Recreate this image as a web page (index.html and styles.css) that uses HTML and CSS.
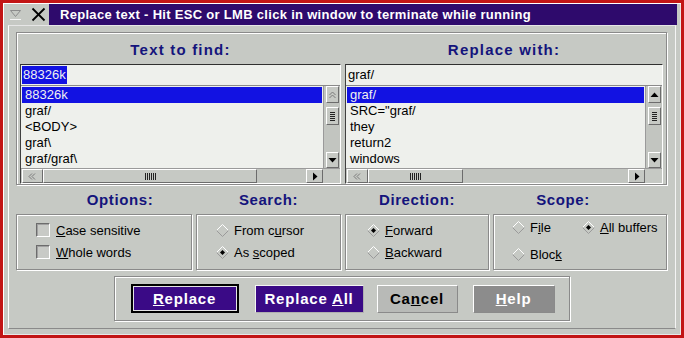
FILE: index.html
```html
<!DOCTYPE html>
<html lang="en">
<head>
	<meta charset="UTF-8">
	<title>Replace text</title>
	<link rel="stylesheet" href="styles.css">
</head>
<body>
<div class="win">
	<div class="titlerow">
		<div class="sysicons">
			<svg class="ico-min" width="13" height="12" viewBox="0 0 13 12"><polygon points="1.5,1.5 11.5,1.5 6.5,7.5" fill="none" stroke="#8c8c8c"/><line x1="1" y1="10.5" x2="12" y2="10.5" stroke="#f4f4f4"/></svg>
			<svg class="ico-close" width="15" height="15" viewBox="0 0 15 15"><line x1="1.5" y1="1.5" x2="13.5" y2="13.5" stroke="#000" stroke-width="1.8"/><line x1="13.5" y1="1.5" x2="1.5" y2="13.5" stroke="#000" stroke-width="1.8"/></svg>
		</div>
		<div class="title">Replace text - Hit ESC or LMB click in window to terminate while running</div>
	</div>

	<div class="main">
		<div class="lists">
			<div class="pane">
				<h2>Text to find:</h2>
				<div class="field">
					<div class="entry"><span class="sel">88326k</span></div>
					<div class="listbox">
						<ul class="items">
							<li class="current">88326k</li>
							<li>graf/</li>
							<li>&lt;BODY&gt;</li>
							<li>graf\</li>
							<li>graf/graf\</li>
						</ul>
						<div class="vscroll">
							<div class="sbtn up">
								<svg width="11" height="15" viewBox="0 0 11 15"><polyline points="2.5,8 5.5,5 8.5,8" fill="none" stroke="#7a7a7a"/><polyline points="2.5,11 5.5,8 8.5,11" fill="none" stroke="#7a7a7a"/></svg>
							</div>
							<div class="vthumb">
								<svg width="11" height="16" viewBox="0 0 11 16"><path d="M3 4.5h5M3 6.5h5M3 8.5h5M3 10.5h5M3 12.5h5" stroke="#222"/></svg>
							</div>
							<div class="sbtn down">
								<svg width="11" height="14" viewBox="0 0 11 14"><polygon points="1.5,5 9.5,5 5.5,9.5" fill="#000"/></svg>
							</div>
						</div>
					</div>
					<div class="hscroll">
						<div class="sbtn hbtn">
							<svg width="19" height="13" viewBox="0 0 19 13"><polyline points="9,3.5 6,6.5 9,9.5" fill="none" stroke="#7a7a7a"/><polyline points="12,3.5 9,6.5 12,9.5" fill="none" stroke="#7a7a7a"/></svg>
						</div>
						<div class="hthumb thumb-long">
							<svg width="13" height="9" viewBox="0 0 13 9"><path d="M1.5 1v7M3.5 1v7M5.5 1v7M7.5 1v7M9.5 1v7M11.5 1v7" stroke="#222"/></svg>
						</div>
						<div class="trough"></div>
						<div class="sbtn hbtn right">
							<svg width="15" height="13" viewBox="0 0 15 13"><polygon points="6,2.5 10.5,6.5 6,10.5" fill="#000"/></svg>
						</div>
						<div class="corner"></div>
					</div>
				</div>
			</div>

			<div class="pane">
				<h2>Replace with:</h2>
				<div class="field">
					<div class="entry"><span class="plain">graf/</span></div>
					<div class="listbox">
						<ul class="items">
							<li class="current">graf/</li>
							<li>SRC="graf/</li>
							<li>they</li>
							<li>return2</li>
							<li>windows</li>
						</ul>
						<div class="vscroll">
							<div class="sbtn up">
								<svg width="11" height="15" viewBox="0 0 11 15"><polygon points="1.5,10 9.5,10 5.5,5.5" fill="#000"/></svg>
							</div>
							<div class="vthumb">
								<svg width="11" height="16" viewBox="0 0 11 16"><path d="M3 4.5h5M3 6.5h5M3 8.5h5M3 10.5h5M3 12.5h5" stroke="#222"/></svg>
							</div>
							<div class="sbtn down">
								<svg width="11" height="14" viewBox="0 0 11 14"><polygon points="1.5,5 9.5,5 5.5,9.5" fill="#000"/></svg>
							</div>
						</div>
					</div>
					<div class="hscroll">
						<div class="sbtn hbtn">
							<svg width="19" height="13" viewBox="0 0 19 13"><polyline points="9,3.5 6,6.5 9,9.5" fill="none" stroke="#7a7a7a"/><polyline points="12,3.5 9,6.5 12,9.5" fill="none" stroke="#7a7a7a"/></svg>
						</div>
						<div class="hthumb thumb-short">
							<svg width="13" height="9" viewBox="0 0 13 9"><path d="M1.5 1v7M3.5 1v7M5.5 1v7M7.5 1v7M9.5 1v7M11.5 1v7" stroke="#222"/></svg>
						</div>
						<div class="trough"></div>
						<div class="sbtn hbtn right">
							<svg width="15" height="13" viewBox="0 0 15 13"><polygon points="6,2.5 10.5,6.5 6,10.5" fill="#000"/></svg>
						</div>
						<div class="corner"></div>
					</div>
				</div>
			</div>
		</div>

		<div class="groups">
			<div class="group">
				<h3 class="h-opts">Options:</h3>
				<div class="box opts">
					<label class="row"><span class="check"></span><span><u>C</u>ase sensitive</span></label>
					<label class="row"><span class="check"></span><span><u>W</u>hole words</span></label>
				</div>
			</div>
			<div class="group">
				<h3>Search:</h3>
				<div class="box search">
					<label class="row"><svg class="radio" width="13" height="13" viewBox="0 0 13 13"><polyline points="0.5,6.5 6.5,0.5 12.5,6.5" fill="none" stroke="#fff"/><polyline points="0.5,6.5 6.5,12.5 12.5,6.5" fill="none" stroke="#9a9a9a"/></svg><span>From c<u>u</u>rsor</span></label>
					<label class="row"><svg class="radio" width="13" height="13" viewBox="0 0 13 13"><polyline points="0.5,6.5 6.5,0.5 12.5,6.5" fill="none" stroke="#fff"/><polyline points="0.5,6.5 6.5,12.5 12.5,6.5" fill="none" stroke="#9a9a9a"/><polygon points="6.5,4 9,6.5 6.5,9 4,6.5" fill="#000"/></svg><span>As <u>s</u>coped</span></label>
				</div>
			</div>
			<div class="group">
				<h3>Direction:</h3>
				<div class="box dir">
					<label class="row"><svg class="radio" width="13" height="13" viewBox="0 0 13 13"><polyline points="0.5,6.5 6.5,0.5 12.5,6.5" fill="none" stroke="#fff"/><polyline points="0.5,6.5 6.5,12.5 12.5,6.5" fill="none" stroke="#9a9a9a"/><polygon points="6.5,4 9,6.5 6.5,9 4,6.5" fill="#000"/></svg><span><u>F</u>orward</span></label>
					<label class="row"><svg class="radio" width="13" height="13" viewBox="0 0 13 13"><polyline points="0.5,6.5 6.5,0.5 12.5,6.5" fill="none" stroke="#fff"/><polyline points="0.5,6.5 6.5,12.5 12.5,6.5" fill="none" stroke="#9a9a9a"/></svg><span><u>B</u>ackward</span></label>
				</div>
			</div>
			<div class="group">
				<h3 class="h-scope">Scope:</h3>
				<div class="box scope">
					<label class="row"><svg class="radio" width="13" height="13" viewBox="0 0 13 13"><polyline points="0.5,6.5 6.5,0.5 12.5,6.5" fill="none" stroke="#fff"/><polyline points="0.5,6.5 6.5,12.5 12.5,6.5" fill="none" stroke="#9a9a9a"/></svg><span>F<u>i</u>le</span></label>
					<label class="row"><svg class="radio" width="13" height="13" viewBox="0 0 13 13"><polyline points="0.5,6.5 6.5,0.5 12.5,6.5" fill="none" stroke="#fff"/><polyline points="0.5,6.5 6.5,12.5 12.5,6.5" fill="none" stroke="#9a9a9a"/><polygon points="6.5,4 9,6.5 6.5,9 4,6.5" fill="#000"/></svg><span><u>A</u>ll buffers</span></label>
					<label class="row"><svg class="radio" width="13" height="13" viewBox="0 0 13 13"><polyline points="0.5,6.5 6.5,0.5 12.5,6.5" fill="none" stroke="#fff"/><polyline points="0.5,6.5 6.5,12.5 12.5,6.5" fill="none" stroke="#9a9a9a"/></svg><span>Bloc<u>k</u></span></label>
				</div>
			</div>
		</div>

		<div class="btnbar">
			<button class="btn purple default"><u>R</u>eplace</button>
			<button class="btn purple all">Replace <u>A</u>ll</button>
			<button class="btn cancel">Ca<u>n</u>cel</button>
			<button class="btn help"><u>H</u>elp</button>
		</div>
	</div>
</div>
</body>
</html>
```

FILE: styles.css
```css
*{margin:0;padding:0;box-sizing:border-box;list-style:none;}
body{
	width:684px;
	height:338px;
	overflow:hidden;
	font-family:"Liberation Sans",Arial,sans-serif;
	font-size:13px;
	color:#000;
	background:#c6c9c4;
}
.win{
	width:684px;
	height:338px;
	border:3px solid #c21515;
	box-shadow:inset 1px 1px 0 #fff, inset -1px -1px 0 #e8e8e8;
	background:#c6c9c4;
	display:flex;
	flex-direction:column;
}

/* title */
.titlerow{
	display:flex;
	height:21px;
	margin:1px 4px 0 1px;
}
.sysicons{
	width:45px;
	display:flex;
	align-items:center;
	gap:9px;
	padding-left:5px;
	background:#c6c9c4;
}
.ico-min{margin-top:1px;}
.title{
	flex:1;
	background:#2e0a6c;
	color:#fff;
	font-weight:bold;
	font-size:13px;
	letter-spacing:0.3px;
	line-height:21px;
	padding-left:11px;
	white-space:nowrap;
}

/* body frame */
.main{
	flex:1;
	margin:0 5px 6px 5px;
	border:1px solid;
	border-color:#e6e6e6 #f4f4f4 #8a8a8a #fff;
	padding:6px 8px 7px 7px;
	display:flex;
	flex-direction:column;
}
.lists{
	height:153px;
	border:1px solid #8a8a8a;
	box-shadow:inset 1px 1px 0 #fff, 1px 1px 0 #fff;
	display:flex;
	gap:4px;
	padding:0 3px;
}
.pane{
	display:flex;
	flex-direction:column;
}
.pane:first-child{width:321px;}
.pane:last-child{width:318px;}
.pane h2, .group h3{
	font-size:15px;
	font-weight:bold;
	color:#14147c;
	text-align:center;
	letter-spacing:0.6px;
}
.pane h2{height:31px;line-height:33px;letter-spacing:1.2px;}
.field{
	height:120px;
	border:1px solid;
	border-color:#303030 #fff #fff #404040;
	display:flex;
	flex-direction:column;
	background:#eef0ec;
}
.entry{
	height:21px;
	border-bottom:1px solid #8a8a8a;
	padding-left:1px;
}
.entry span{
	display:inline-block;
	margin-top:1px;
	line-height:18px;
	padding:0 1px;
}
.entry .sel{background:#1212e2;color:#f0f0f0;}
.listbox{
	height:82px;
	display:flex;
}
.items{
	flex:1;
	padding:1px 1px 0 1px;
	overflow:hidden;
}
.items li{
	height:16px;
	line-height:16px;
	padding-left:3px;
	white-space:nowrap;
}
.items li.current{background:#1212e2;color:#f0f0f0;}

/* scrollbars */
.sbtn{
	background:#c6c9c4;
	border:1px solid;
	border-color:#fff #6c6c6c #6c6c6c #fff;
	display:flex;
	align-items:center;
	justify-content:center;
}
.vscroll{
	width:17px;
	background:#c2c5c0;
	border-left:1px solid #9a9a9a;
	display:flex;
	flex-direction:column;
	align-items:center;
}
.vscroll .sbtn{width:13px;}
.vscroll .up{height:17px;}
.vscroll .down{height:16px;margin-top:auto;}
.vthumb{
	width:13px;
	height:18px;
	margin-top:4px;
	background:#c6c9c4;
	border:1px solid;
	border-color:#fff #6c6c6c #6c6c6c #fff;
	display:flex;
	align-items:center;
	justify-content:center;
}
.hscroll{
	height:15px;
	display:flex;
	background:#c2c5c0;
	border-top:1px solid #9a9a9a;
}
.hbtn{width:21px;margin-left:1px;}
.hbtn.right{width:17px;margin-left:0;}
.hthumb{
	background:#c6c9c4;
	border:1px solid;
	border-color:#fff #6c6c6c #6c6c6c #fff;
	display:flex;
	align-items:center;
	justify-content:center;
}
.thumb-long{width:214px;}
.thumb-short{width:95px;}
.trough{flex:1;}
.corner{width:17px;background:#c6c9c4;}

/* option groups */
.groups{
	display:grid;
	grid-template-columns:176px 145px 144px 174px;
	column-gap:4px;
}
.group h3{height:29px;line-height:30px;}
.group .h-opts{padding-left:32px;}
.group .h-scope{padding-right:34px;}
.box{
	height:56px;
	border:1px solid #8a8a8a;
	box-shadow:inset 1px 1px 0 #fff, 1px 1px 0 #fff;
	display:flex;
	flex-direction:column;
	gap:2px;
	padding-top:5px;
}
.row{
	height:20px;
	display:flex;
	align-items:center;
	gap:5px;
	white-space:nowrap;
}
.opts{padding-left:19px;}
.opts .row{gap:6px;}
.search{padding-left:19px;}
.dir{padding-left:21px;}
.scope{
	display:grid;
	grid-template-columns:68px auto;
	row-gap:3px;
	padding:2px 0 0 18px;
}
.check{
	width:14px;
	height:14px;
	background:#c8cac6;
	border:1px solid;
	border-color:#6c6c6c #fff #fff #6c6c6c;
	box-shadow:inset 1px 1px 0 #a0a0a0;
}
.radio{flex:none;}

/* buttons */
.btnbar{
	width:456px;
	height:45px;
	margin:6px auto 0;
	border:1px solid #8a8a8a;
	box-shadow:inset 1px 1px 0 #fff, 1px 1px 0 #fff;
	display:flex;
	align-items:center;
	padding-left:16px;
}
.btn{
	font-family:"Liberation Sans",Arial,sans-serif;
	font-size:15px;
	font-weight:bold;
	letter-spacing:0.8px;
	height:28px;
	border:1px solid;
	border-color:#fff #8a8a8a #8a8a8a #fff;
	color:#fff;
}
.purple{background:#3a0a86;}
.default{
	width:108px;
	height:29px;
	border:2px solid #000;
	box-shadow:inset 0 0 0 1px #e4e4e4;
}
.all{width:109px;margin-left:16px;border-color:#f4f4f4 #b0b0b0 #b0b0b0 #f4f4f4;}
.cancel{width:81px;margin-left:13px;background:#b8bab7;color:#000;}
.help{width:82px;margin-left:15px;background:#8c8c8c;}
```
